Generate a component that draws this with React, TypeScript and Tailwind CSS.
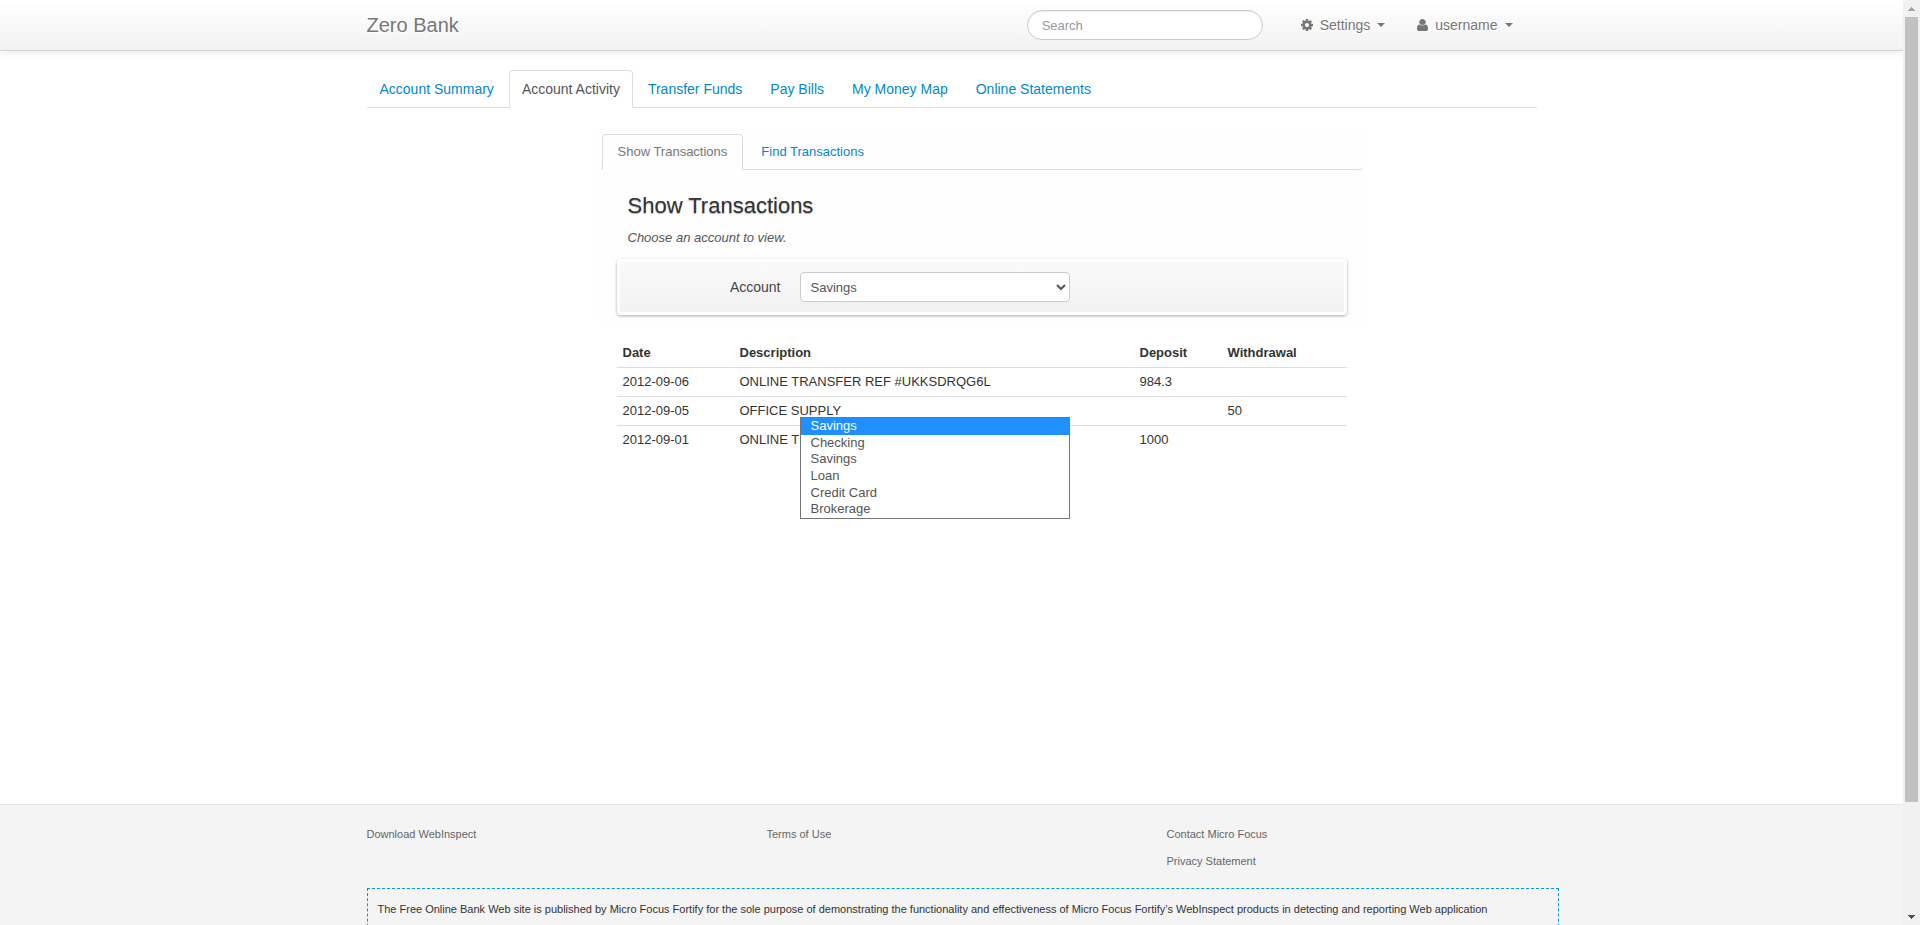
import React from "react";

const COG_PATH =
  "M1024 640q0 106 -75 181t-181 75t-181 -75t-75 -181t75 -181t181 -75t181 75t75 181zM1536 749v-222q0 -12 -8 -23t-20 -13l-185 -28q-19 -54 -39 -91q35 -50 107 -138q10 -12 10 -25t-9 -23q-27 -37 -99 -108t-94 -71q-12 0 -26 9l-138 108q-44 -23 -91 -38q-16 -136 -29 -186q-7 -28 -36 -28h-222q-14 0 -24.5 8.5t-11.5 21.5l-28 184q-49 16 -90 37l-141 -107q-10 -9 -25 -9q-14 0 -25 11q-126 114 -165 168q-7 10 -7 23q0 12 8 23q15 21 51 66.5t54 70.5q-27 50 -41 99l-183 27q-13 2 -21 12.5t-8 23.5v222q0 12 8 23t19 13l186 28q14 46 39 92q-40 57 -107 138q-10 12 -10 24q0 10 9 23q26 36 98.5 107.5t94.5 71.5q13 0 26 -10l138 -107q44 23 91 38q16 136 29 186q7 28 36 28h222q14 0 24.5 -8.5t11.5 -21.5l28 -184q49 -16 90 -37l142 107q9 9 24 9q13 0 25 -10q129 -119 165 -170q7 -8 7 -22q0 -12 -8 -23q-15 -21 -51 -66.5t-54 -70.5q26 -50 41 -98l183 -28q13 -2 21 -12.5t8 -23.5z";

const USER_PATH =
  "M1280 137q0 -109 -62.5 -187t-150.5 -78h-854q-88 0 -150.5 78t-62.5 187q0 85 8.5 160.5t31.5 152t58.5 131t94 89t134.5 34.5q131 -128 313 -128t313 128q76 0 134.5 -34.5t94 -89t58.5 -131t31.5 -152t8.5 -160.5zM1024 1024q0 -159 -112.5 -271.5t-271.5 -112.5t-271.5 112.5t-112.5 271.5t112.5 271.5t271.5 112.5t271.5 -112.5t112.5 -271.5z";

function CogIcon() {
  return (
    <svg viewBox="0 -1408 1536 1536" className="h-3 w-3 fill-[#777]" aria-hidden="true">
      <path d={COG_PATH} transform="scale(1,-1)" />
    </svg>
  );
}

function UserIcon() {
  return (
    <svg viewBox="0 -1408 1280 1536" preserveAspectRatio="none" className="h-3 w-[11px] fill-[#777]" aria-hidden="true">
      <path d={USER_PATH} transform="scale(1,-1)" />
    </svg>
  );
}

function Caret() {
  return (
    <svg viewBox="0 0 8 4" className="h-1 w-2 fill-[#777]" aria-hidden="true">
      <path d="M0 0h8L4 4z" />
    </svg>
  );
}

function NavMenu({ icon, label }: { icon: React.ReactNode; label: string }) {
  return (
    <button
      type="button"
      className="flex items-center gap-[7px] px-4 text-sm text-[#777] [text-shadow:0_1px_0_#fff]"
    >
      {icon}
      <span>{label}</span>
      <Caret />
    </button>
  );
}

function Header() {
  return (
    <header className="border-b border-[#d4d4d4] bg-linear-to-b from-white to-[#f2f2f2] shadow-[0_1px_10px_rgba(0,0,0,0.1)]">
      <div className="mx-auto flex h-[50px] max-w-[1170px] items-center">
        <a href="#home" className="text-xl text-[#777] [text-shadow:0_1px_0_#fff]">
          Zero Bank
        </a>
        <form className="ml-auto mr-[22px] flex">
          <input
            type="text"
            aria-label="Search"
            placeholder="Search"
            className="h-[30px] w-[236px] rounded-full border border-[#ccc] bg-white px-3.5 text-[13px] text-[#555] shadow-[inset_0_1px_1px_rgba(0,0,0,0.075)] placeholder:text-[#999]"
          />
        </form>
        <NavMenu icon={<CogIcon />} label="Settings" />
        <NavMenu icon={<UserIcon />} label="username" />
        <span className="w-2" />
      </div>
    </header>
  );
}

const MAIN_TABS = [
  "Account Summary",
  "Account Activity",
  "Transfer Funds",
  "Pay Bills",
  "My Money Map",
  "Online Statements",
];

function MainTabs() {
  return (
    <nav className="border-b border-[#ddd]">
      <ul className="-mb-px flex gap-0.5">
        {MAIN_TABS.map((tab) => (
          <li key={tab}>
            <a
              href="#tab"
              className={
                tab === "Account Activity"
                  ? "block rounded-t border border-[#ddd] border-b-white bg-white px-3 py-2 text-sm text-[#555]"
                  : "block rounded-t border border-transparent px-3 py-2 text-sm text-[#0088cc]"
              }
            >
              {tab}
            </a>
          </li>
        ))}
      </ul>
    </nav>
  );
}

function InnerTabs() {
  return (
    <nav className="mx-1 rounded border-b border-[#ddd]">
      <ul className="-mb-px ml-px flex gap-0.5 text-[13px] leading-[18px]">
        <li>
          <a
            href="#show"
            className="block rounded-t border border-[#ddd] border-b-[#fefefe] bg-[#fefefe] px-[15px] py-2 text-[#777]"
          >
            Show Transactions
          </a>
        </li>
        <li>
          <a
            href="#find"
            className="block rounded-t border border-transparent px-[15px] py-2 text-[#0088cc]"
          >
            Find Transactions
          </a>
        </li>
      </ul>
    </nav>
  );
}

const OPTIONS = ["Savings", "Checking", "Savings", "Loan", "Credit Card", "Brokerage"];

function AccountPicker() {
  return (
    <div className="mt-[11px] flex items-center gap-[19px] rounded border-[3px] border-white bg-linear-to-b from-[#fafafa] to-[#f1f1f1] py-2.5 shadow-[0_1px_3px_rgba(0,0,0,0.35)]">
      <label htmlFor="account" className="w-[161px] text-right text-sm text-[#444]">
        Account
      </label>
      <div className="relative w-[270px]">
        <select
          id="account"
          className="block h-[30px] w-full rounded border border-[#ccc] bg-white px-1.5 text-[13px] text-[#555]"
        >
          {OPTIONS.map((option, i) => (
            <option key={i}>{option}</option>
          ))}
        </select>
        <ul className="absolute left-0 top-[145px] z-10 grid h-[102px] w-full grid-rows-6 border border-[#767676] bg-white text-[13px] leading-4 text-[#555]">
          {OPTIONS.map((option, i) => (
            <li key={i} className={i === 0 ? "bg-[#1e90ff] px-2.5 text-white" : "px-2.5"}>
              {option}
            </li>
          ))}
        </ul>
      </div>
    </div>
  );
}

const ROWS = [
  { date: "2012-09-06", description: "ONLINE TRANSFER REF #UKKSDRQG6L", deposit: "984.3", withdrawal: "" },
  { date: "2012-09-05", description: "OFFICE SUPPLY", deposit: "", withdrawal: "50" },
  { date: "2012-09-01", description: "ONLINE TRANSFER", deposit: "1000", withdrawal: "" },
];

function TransactionsTable() {
  return (
    <table className="w-full table-fixed text-left text-[13px] leading-[18px] text-[#333]">
      <thead>
        <tr>
          <th className="w-[117px] px-1.5 py-[5px]">Date</th>
          <th className="w-[400px] px-1.5 py-[5px]">Description</th>
          <th className="w-[88px] px-1.5 py-[5px]">Deposit</th>
          <th className="px-1.5 py-[5px]">Withdrawal</th>
        </tr>
      </thead>
      <tbody>
        {ROWS.map((row) => (
          <tr key={row.date} className="border-t border-[#ddd]">
            <td className="px-1.5 py-[5px]">{row.date}</td>
            <td className="px-1.5 py-[5px]">{row.description}</td>
            <td className="px-1.5 py-[5px]">{row.deposit}</td>
            <td className="px-1.5 py-[5px]">{row.withdrawal}</td>
          </tr>
        ))}
      </tbody>
    </table>
  );
}

function Footer() {
  return (
    <footer className="grow border-t border-[#e5e5e5] bg-[#f4f4f4] pt-5">
      <div className="mx-auto max-w-[1170px] text-[11px]">
        <div className="grid grid-cols-[400px_400px_1fr] leading-[18px] text-[#666]">
          <ul>
            <li>
              <a href="#download">Download WebInspect</a>
            </li>
          </ul>
          <ul>
            <li>
              <a href="#terms">Terms of Use</a>
            </li>
          </ul>
          <ul className="flex flex-col gap-[9px]">
            <li>
              <a href="#contact">Contact Micro Focus</a>
            </li>
            <li>
              <a href="#privacy">Privacy Statement</a>
            </li>
          </ul>
        </div>
        <div className="-mr-[22px] mt-[18px] border border-dashed border-[#0099d8] px-2.5 pb-16 pt-[11px] leading-[18px] text-[#333]">
          The Free Online Bank Web site is published by Micro Focus Fortify for the sole purpose of
          demonstrating the functionality and effectiveness of Micro Focus Fortify’s WebInspect
          products in detecting and reporting Web application
        </div>
      </div>
    </footer>
  );
}

function ScrollBar() {
  return (
    <div className="flex w-[17px] shrink-0 flex-col items-center bg-[#f1f1f1]" aria-hidden="true">
      <div className="flex h-[17px] items-center">
        <svg viewBox="0 0 7 4" className="h-1 w-[7px] fill-[#a3a3a3]" shapeRendering="crispEdges">
          <path d="M3 0h1v1h1v1h1v1h1v1H0V3h1V2h1V1h1z" />
        </svg>
      </div>
      <div className="w-[13px] grow-[785] bg-[#c1c1c1]" />
      <div className="grow-[106]" />
      <div className="flex h-[17px] items-center">
        <svg viewBox="0 0 7 4" className="h-1 w-[7px] fill-[#505050]" shapeRendering="crispEdges">
          <path d="M0 0h7v1H6v1H5v1H4v1H3V3H2V2H1V1H0z" />
        </svg>
      </div>
    </div>
  );
}

export default function App() {
  return (
    <div className="flex h-screen overflow-hidden bg-white font-['Liberation_Sans',Arial,sans-serif] text-[#333]">
      <div className="flex min-w-0 grow flex-col overflow-hidden">
        <Header />
        <main className="mx-auto min-h-[753px] w-full max-w-[1170px] pt-[19px]">
          <MainTabs />
          <section className="ml-[230px] mt-5 max-w-[770px]">
            <div className="bg-[#fefefe] pb-2 pt-1.5">
              <InnerTabs />
              <div className="px-5">
                <h2 className="mt-4 pl-[11px] text-[22px] leading-10 text-[#333] [text-shadow:0_1px_1px_rgba(0,0,0,0.3)]">
                  Show Transactions
                </h2>
                <p className="mt-0.5 pl-[11px] text-[13px] italic leading-5 text-[#555]">
                  Choose an account to view.
                </p>
                <AccountPicker />
              </div>
            </div>
            <div className="mt-4 px-5">
              <TransactionsTable />
            </div>
          </section>
        </main>
        <Footer />
      </div>
      <ScrollBar />
    </div>
  );
}
